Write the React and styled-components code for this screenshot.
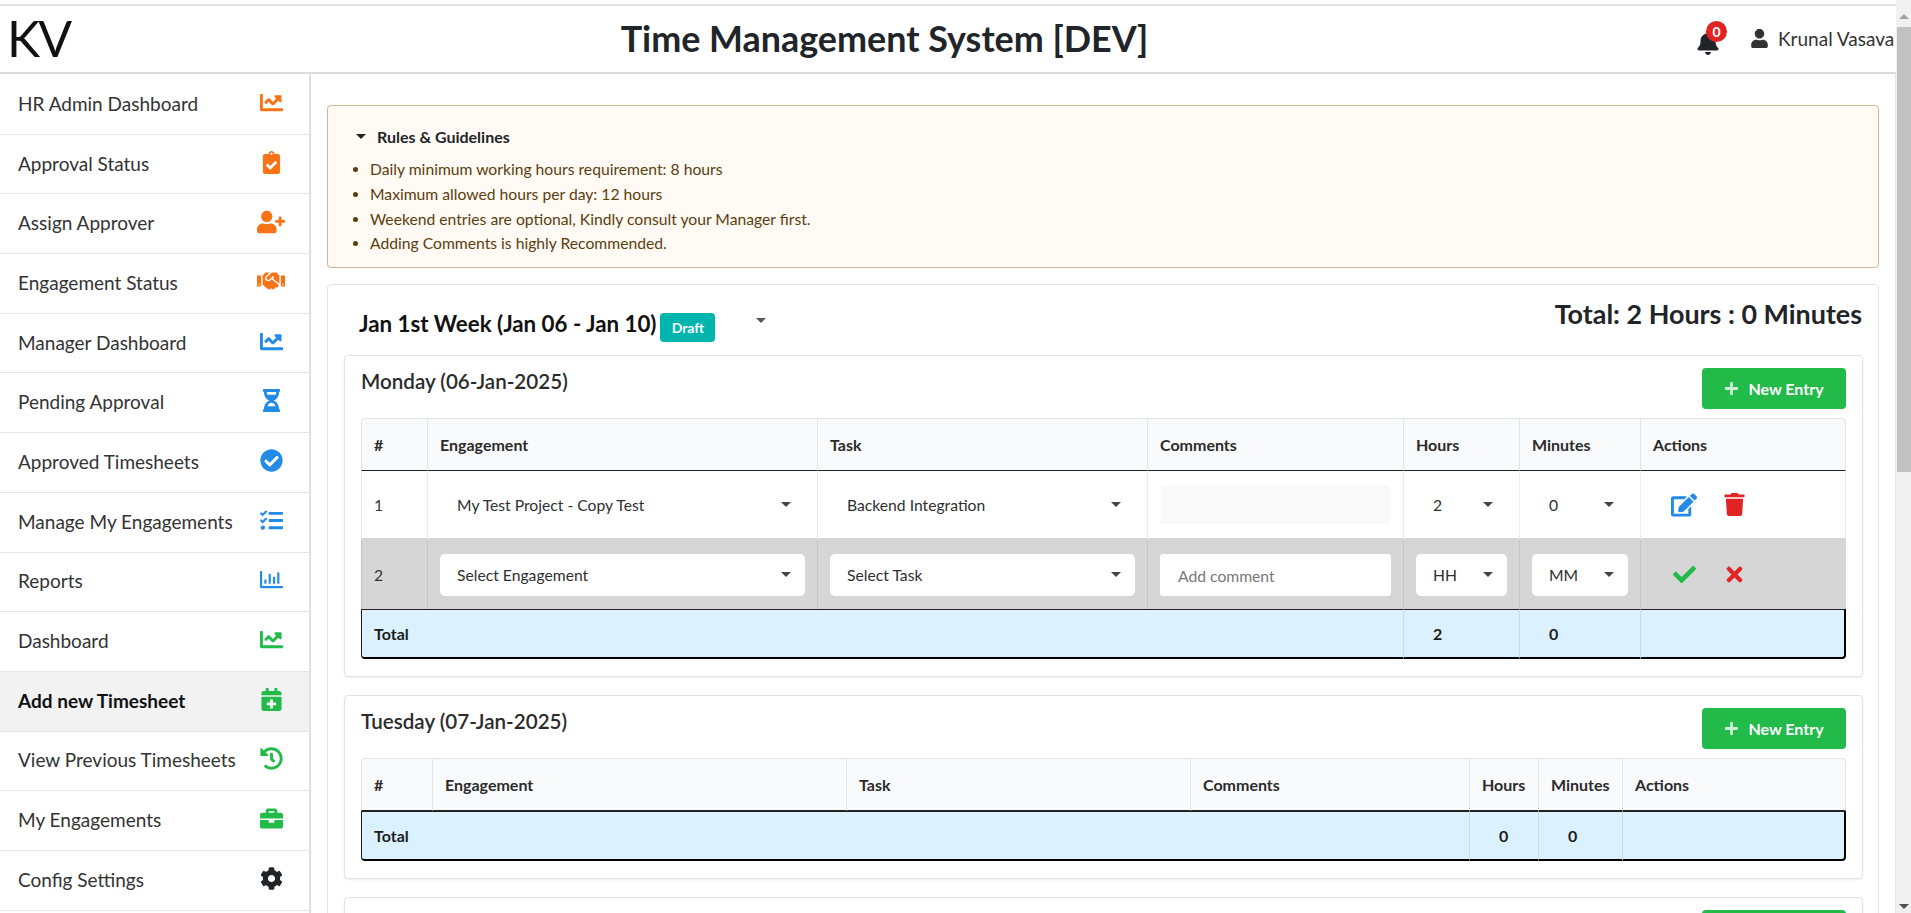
import React from 'react'
import styled, { createGlobalStyle } from 'styled-components'
import {
  FaChartLine, FaClipboardCheck, FaUserPlus, FaHandshake, FaHourglassHalf, FaCheckCircle,
  FaTasks, FaRegChartBar, FaCalendarPlus, FaHistory, FaBriefcase, FaCog, FaBell, FaUser,
  FaEdit, FaTrash, FaCheck, FaTimes, FaPlus,
} from 'react-icons/fa'

const GlobalStyle = createGlobalStyle`
  html, body { margin: 0; padding: 0; height: 100%; overflow: hidden; background: #fff; }
  body { font-family: Lato, "Open Sans", sans-serif; color: #212529; }
  * { box-sizing: border-box; }
`

const ORANGE = '#f97316'
const BLUE = '#228be6'
const GREEN = '#22bb4a'
const DARK = '#212529'
const RED = '#e02424'

const Page = styled.div`
  display: flex;
  height: 913px;
  width: 1911px;
  overflow: hidden;
`
const Frame = styled.div`
  flex: 1;
  min-width: 0;
  display: flex;
  flex-direction: column;
  border-top: 2px solid #e2e2e2;
  margin-top: 4px;
`
const Header = styled.header`
  height: 68px;
  flex: none;
  display: flex;
  align-items: center;
  border-bottom: 2px solid #dcdcdc;
  padding-bottom: 2px;
`
const Logo = styled.div`
  width: 310px;
  flex: none;
  padding-left: 7px;
  font-size: 50px;
  letter-spacing: -2px;
  line-height: 1;
  color: #111;
`
const Title = styled.h1`
  flex: 1;
  margin: 0;
  padding-right: 234px;
  text-align: center;
  font-size: 35.9px;
  font-weight: 700;
  color: #212529;
`
const HeaderRight = styled.div`
  display: flex;
  align-items: center;
  width: 203px;
  flex: none;
  white-space: nowrap;
  overflow: hidden;
  height: 100%;
  padding-left: 3px;
`
const BellWrap = styled.div`
  position: relative;
  width: 22px;
  height: 24px;
  margin-top: 9px;
  font-size: 24px;
  color: ${DARK};
  & > svg { display: block; }
`
const Badge = styled.span`
  position: absolute;
  top: -10px;
  left: 10px;
  width: 21px;
  height: 21px;
  border-radius: 50%;
  background: ${RED};
  color: #fff;
  font-size: 14px;
  font-weight: 700;
  display: flex;
  align-items: center;
  justify-content: center;
`
const UserName = styled.div`
  display: flex;
  align-items: center;
  gap: 9px;
  margin-left: 32px;
  font-size: 19px;
  color: #333;
`
const Body = styled.div`
  flex: 1;
  min-height: 0;
  display: flex;
`
const Sidebar = styled.nav`
  width: 311px;
  flex: none;
  padding-top: 1px;
  border-right: 2px solid #e0e0e0;
  overflow: hidden;
`
const NavItem = styled.div`
  height: 59.7px;
  display: flex;
  align-items: center;
  justify-content: space-between;
  padding: 0 24px 2px 18px;
  border-bottom: 1px solid #e6e6e6;
  font-size: 19px;
  font-weight: ${(p) => (p.$active ? 700 : 400)};
  background: ${(p) => (p.$active ? '#f2f2f2' : '#fff')};
  color: ${(p) => (p.$active ? '#111' : '#333')};
`
const NavIcon = styled.span`
  width: 28px;
  display: flex;
  justify-content: center;
  font-size: ${(p) => (p.$wide ? 28 : 23)}px;
  color: ${(p) => p.$color};
  margin-top: -2px;
`
const Main = styled.main`
  flex: 1;
  min-width: 0;
  overflow: hidden;
  padding: 31px 16px 0;
  border-right: 1px solid #e6e6e6;
`
const Rules = styled.section`
  height: 163px;
  border: 1px solid #cdb892;
  border-radius: 4px;
  background: #fffaf3;
  padding: 18px 22px;
  color: #5c3d0e;
  font-size: 15.7px;
`
const RulesHead = styled.div`
  display: flex;
  align-items: center;
  gap: 11px;
  margin-left: 6px;
  height: 24px;
  font-size: 16px;
  font-weight: 700;
  color: #212529;
`
const Caret = styled.span`
  display: inline-block;
  border-left: ${(p) => p.$size || 5}px solid transparent;
  border-right: ${(p) => p.$size || 5}px solid transparent;
  border-top: ${(p) => p.$size || 5}px solid ${(p) => p.$color || '#333'};
`
const RulesList = styled.ul`
  margin: 9px 0 0;
  padding: 0 0 0 20px;
  line-height: 24.8px;
`
const WeekCard = styled.section`
  margin-top: 16px;
  border: 1px solid #e3e3e3;
  border-radius: 4px;
  padding: 0 15px 0 16px;
`
const WeekHead = styled.div`
  height: 70px;
  display: flex;
  align-items: flex-start;
  justify-content: space-between;
`
const WeekLeft = styled.div`
  display: flex;
  align-items: center;
  margin: 20px 0 0 15px;
`
const WeekTitle = styled.div`
  font-size: 22.3px;
  font-weight: 700;
  color: #111;
`
const StatusTag = styled.span`
  margin: 8px 0 0 4px;
  width: 55px;
  height: 29px;
  border-radius: 4px;
  background: #00b5ad;
  color: #fff;
  font-size: 14px;
  font-weight: 700;
  display: flex;
  align-items: center;
  justify-content: center;
`
const WeekCaret = styled.span`
  margin: 0 0 6px 41px;
  display: flex;
`
const WeekTotal = styled.div`
  margin: 12px 1px 0 0;
  font-size: 26.9px;
  font-weight: 700;
  color: #212529;
`
const DayCard = styled.section`
  border: 1px solid #e3e3e3;
  border-radius: 4px;
  box-shadow: 0 1px 2px rgba(0, 0, 0, 0.08);
  padding: 12px 16px 17px;
  margin-bottom: 18px;
`
const DayHead = styled.div`
  display: flex;
  align-items: flex-start;
  justify-content: space-between;
  height: 50px;
`
const DayTitle = styled.h3`
  margin: 1px 0 0;
  font-size: 20.6px;
  font-weight: 600;
  color: #2b2b2b;
`
const NewEntry = styled.button`
  width: 144px;
  height: 41px;
  margin-left: auto;
  border: none;
  border-radius: 4px;
  background: ${GREEN};
  color: #fff;
  font-family: inherit;
  font-size: 16px;
  font-weight: 700;
  display: flex;
  align-items: center;
  justify-content: center;
  gap: 9px;
`
const Table = styled.table`
  width: 100%;
  table-layout: fixed;
  border-collapse: separate;
  border-spacing: 0;
  font-size: 15.7px;
  color: #333;
`
const Col = styled.col`
  width: ${(p) => p.$w}px;
`
const Th = styled.th`
  height: 53px;
  padding: 0 12px;
  text-align: left;
  font-size: 16px;
  font-weight: 700;
  color: #2b2b2b;
  background: #f9fafb;
  border-top: 1px solid #e3e3e3;
  border-bottom: 1px solid #222;
  border-left: 1px solid #e3e3e3;
  &:first-child { border-top-left-radius: 4px; }
  &:last-child { border-top-right-radius: 4px; border-right: 1px solid #e3e3e3; }
`
const Td = styled.td`
  height: 69px;
  padding: 0 12px;
  background: ${(p) => (p.$new ? '#d6d6d6' : '#fff')};
  border-left: 1px solid ${(p) => (p.$new ? '#c4c4c4' : '#ececec')};
  border-bottom: ${(p) => (p.$new ? 'none' : '2px solid #d4d4d4')};
  &:last-child { border-right: 1px solid ${(p) => (p.$new ? '#d6d6d6' : '#ececec')}; }
`
const TotalTd = styled.td`
  height: 50px;
  padding: 0 12px;
  padding-left: ${(p) => (p.$num ? 29 : 12)}px;
  font-size: 16px;
  font-weight: 700;
  color: #1c1c1c;
  background: #dbf1fe;
  border-top: 1px solid #222;
  border-bottom: 2px solid #000;
  border-left: 1px solid ${(p) => (p.$first ? '#222' : '#c9dde8')};
  &:first-child { border-bottom-left-radius: 4px; }
  &:last-child { border-bottom-right-radius: 4px; border-right: 2px solid #000; }
`
const Select = styled.div`
  height: 42px;
  display: flex;
  align-items: center;
  justify-content: space-between;
  padding: 0 14px 0 17px;
  border-radius: 5px;
  background: ${(p) => (p.$plain ? 'transparent' : '#fff')};
  color: #2f2f2f;
`
const CommentBox = styled.div`
  height: 39px;
  margin: 0 1px;
  border-radius: 2px;
  background: #f9f9f9;
`
const CommentInput = styled.div`
  height: 42px;
  display: flex;
  align-items: center;
  padding: 2px 18px 0;
  border-radius: 3px;
  background: #fff;
  color: #777;
`
const Actions = styled.div`
  display: flex;
  align-items: center;
  gap: 20px;
  padding-left: 16px;
`
const ActionIcon = styled.span`
  width: 30px;
  display: flex;
  justify-content: center;
  font-size: ${(p) => p.$size || 23}px;
  color: ${(p) => p.$color};
`
const ScrollTrack = styled.div`
  width: 15px;
  flex: none;
  padding-top: 6px;
  background: #f1f1f1;
  display: flex;
  flex-direction: column;
  align-items: flex-end;
`
const ScrollBtn = styled.div`
  width: 14px;
  height: ${(p) => p.$h}px;
  display: flex;
  align-items: center;
  justify-content: center;
  background: #f1f1f1;
`
const ScrollThumb = styled.div`
  width: 14px;
  height: 445px;
  background: #c1c1c1;
`
const ScrollSpace = styled.div`
  flex: 1;
`
const ArrowUp = styled.span`
  border-left: 5px solid transparent;
  border-right: 5px solid transparent;
  border-bottom: 5px solid #a3a3a3;
`
const ArrowDown = styled.span`
  border-left: 5px solid transparent;
  border-right: 5px solid transparent;
  border-top: 5px solid #505050;
`

const navItems = [
  ['HR Admin Dashboard', FaChartLine, ORANGE],
  ['Approval Status', FaClipboardCheck, ORANGE],
  ['Assign Approver', FaUserPlus, ORANGE, false, true],
  ['Engagement Status', FaHandshake, ORANGE, false, true],
  ['Manager Dashboard', FaChartLine, BLUE],
  ['Pending Approval', FaHourglassHalf, BLUE],
  ['Approved Timesheets', FaCheckCircle, BLUE],
  ['Manage My Engagements', FaTasks, BLUE],
  ['Reports', FaRegChartBar, BLUE],
  ['Dashboard', FaChartLine, GREEN],
  ['Add new Timesheet', FaCalendarPlus, GREEN, true],
  ['View Previous Timesheets', FaHistory, GREEN],
  ['My Engagements', FaBriefcase, GREEN],
  ['Config Settings', FaCog, DARK],
]

const rules = [
  'Daily minimum working hours requirement: 8 hours',
  'Maximum allowed hours per day: 12 hours',
  'Weekend entries are optional, Kindly consult your Manager first.',
  'Adding Comments is highly Recommended.',
]

const heads = ['#', 'Engagement', 'Task', 'Comments', 'Hours', 'Minutes', 'Actions']

const DropDown = ({ label, plain }) => (
  <Select $plain={plain}>
    {label}
    <Caret $color="#444" />
  </Select>
)

const TimesheetTable = ({ widths, rows, hours }) => (
  <Table>
    <colgroup>
      {widths.map((w, i) => <Col key={i} $w={w} />)}
    </colgroup>
    <thead>
      <tr>{heads.map((h) => <Th key={h}>{h}</Th>)}</tr>
    </thead>
    <tbody>
      {rows}
      <tr>
        <TotalTd $first colSpan={4}>Total</TotalTd>
        <TotalTd $num>{hours}</TotalTd>
        <TotalTd $num>0</TotalTd>
        <TotalTd />
      </tr>
    </tbody>
  </Table>
)

const Day = ({ title, children }) => (
  <DayCard>
    <DayHead>
      {title && <DayTitle>{title}</DayTitle>}
      <NewEntry>{title && <><FaPlus size={15} color="#cdeed6" />New Entry</>}</NewEntry>
    </DayHead>
    {children}
  </DayCard>
)

export default function App() {
  return (
    <Page>
      <GlobalStyle />
      <Frame>
        <Header>
          <Logo>KV</Logo>
          <Title>Time Management System [DEV]</Title>
          <HeaderRight>
            <BellWrap>
              <FaBell />
              <Badge>0</Badge>
            </BellWrap>
            <UserName><FaUser size={19} color="#333" />Krunal Vasava</UserName>
          </HeaderRight>
        </Header>
        <Body>
          <Sidebar>
            {navItems.map(([label, Icon, color, active, wide]) => (
              <NavItem key={label} $active={active}>
                {label}
                <NavIcon $color={color} $wide={wide}><Icon /></NavIcon>
              </NavItem>
            ))}
          </Sidebar>
          <Main>
            <Rules>
              <RulesHead><Caret $size={5} $color="#222" />Rules &amp; Guidelines</RulesHead>
              <RulesList>
                {rules.map((r) => <li key={r}>{r}</li>)}
              </RulesList>
            </Rules>
            <WeekCard>
              <WeekHead>
                <WeekLeft>
                  <WeekTitle>Jan 1st Week (Jan 06 - Jan 10)</WeekTitle>
                  <StatusTag>Draft</StatusTag>
                  <WeekCaret><Caret $color="#555" /></WeekCaret>
                </WeekLeft>
                <WeekTotal>Total: 2 Hours : 0 Minutes</WeekTotal>
              </WeekHead>
              <Day title="Monday (06-Jan-2025)">
                <TimesheetTable
                  widths={[66, 390, 330, 256, 116, 121, 206]}
                  hours={2}
                  rows={
                    <>
                      <tr>
                        <Td>1</Td>
                        <Td><DropDown plain label="My Test Project - Copy Test" /></Td>
                        <Td><DropDown plain label="Backend Integration" /></Td>
                        <Td><CommentBox /></Td>
                        <Td><DropDown plain label="2" /></Td>
                        <Td><DropDown plain label="0" /></Td>
                        <Td>
                          <Actions>
                            <ActionIcon $color={BLUE} $size={26}><FaEdit /></ActionIcon>
                            <ActionIcon $color={RED}><FaTrash /></ActionIcon>
                          </Actions>
                        </Td>
                      </tr>
                      <tr>
                        <Td $new>2</Td>
                        <Td $new><DropDown label="Select Engagement" /></Td>
                        <Td $new><DropDown label="Select Task" /></Td>
                        <Td $new><CommentInput>Add comment</CommentInput></Td>
                        <Td $new><DropDown label="HH" /></Td>
                        <Td $new><DropDown label="MM" /></Td>
                        <Td $new>
                          <Actions>
                            <ActionIcon $color={GREEN}><FaCheck /></ActionIcon>
                            <ActionIcon $color={RED}><FaTimes /></ActionIcon>
                          </Actions>
                        </Td>
                      </tr>
                    </>
                  }
                />
              </Day>
              <Day title="Tuesday (07-Jan-2025)">
                <TimesheetTable widths={[71, 414, 344, 279, 69, 84, 224]} hours={0} />
              </Day>
              <Day />
            </WeekCard>
          </Main>
        </Body>
      </Frame>
      <ScrollTrack>
        <ScrollBtn $h={21}><ArrowUp /></ScrollBtn>
        <ScrollThumb />
        <ScrollSpace />
        <ScrollBtn $h={14}><ArrowDown /></ScrollBtn>
      </ScrollTrack>
    </Page>
  )
}
